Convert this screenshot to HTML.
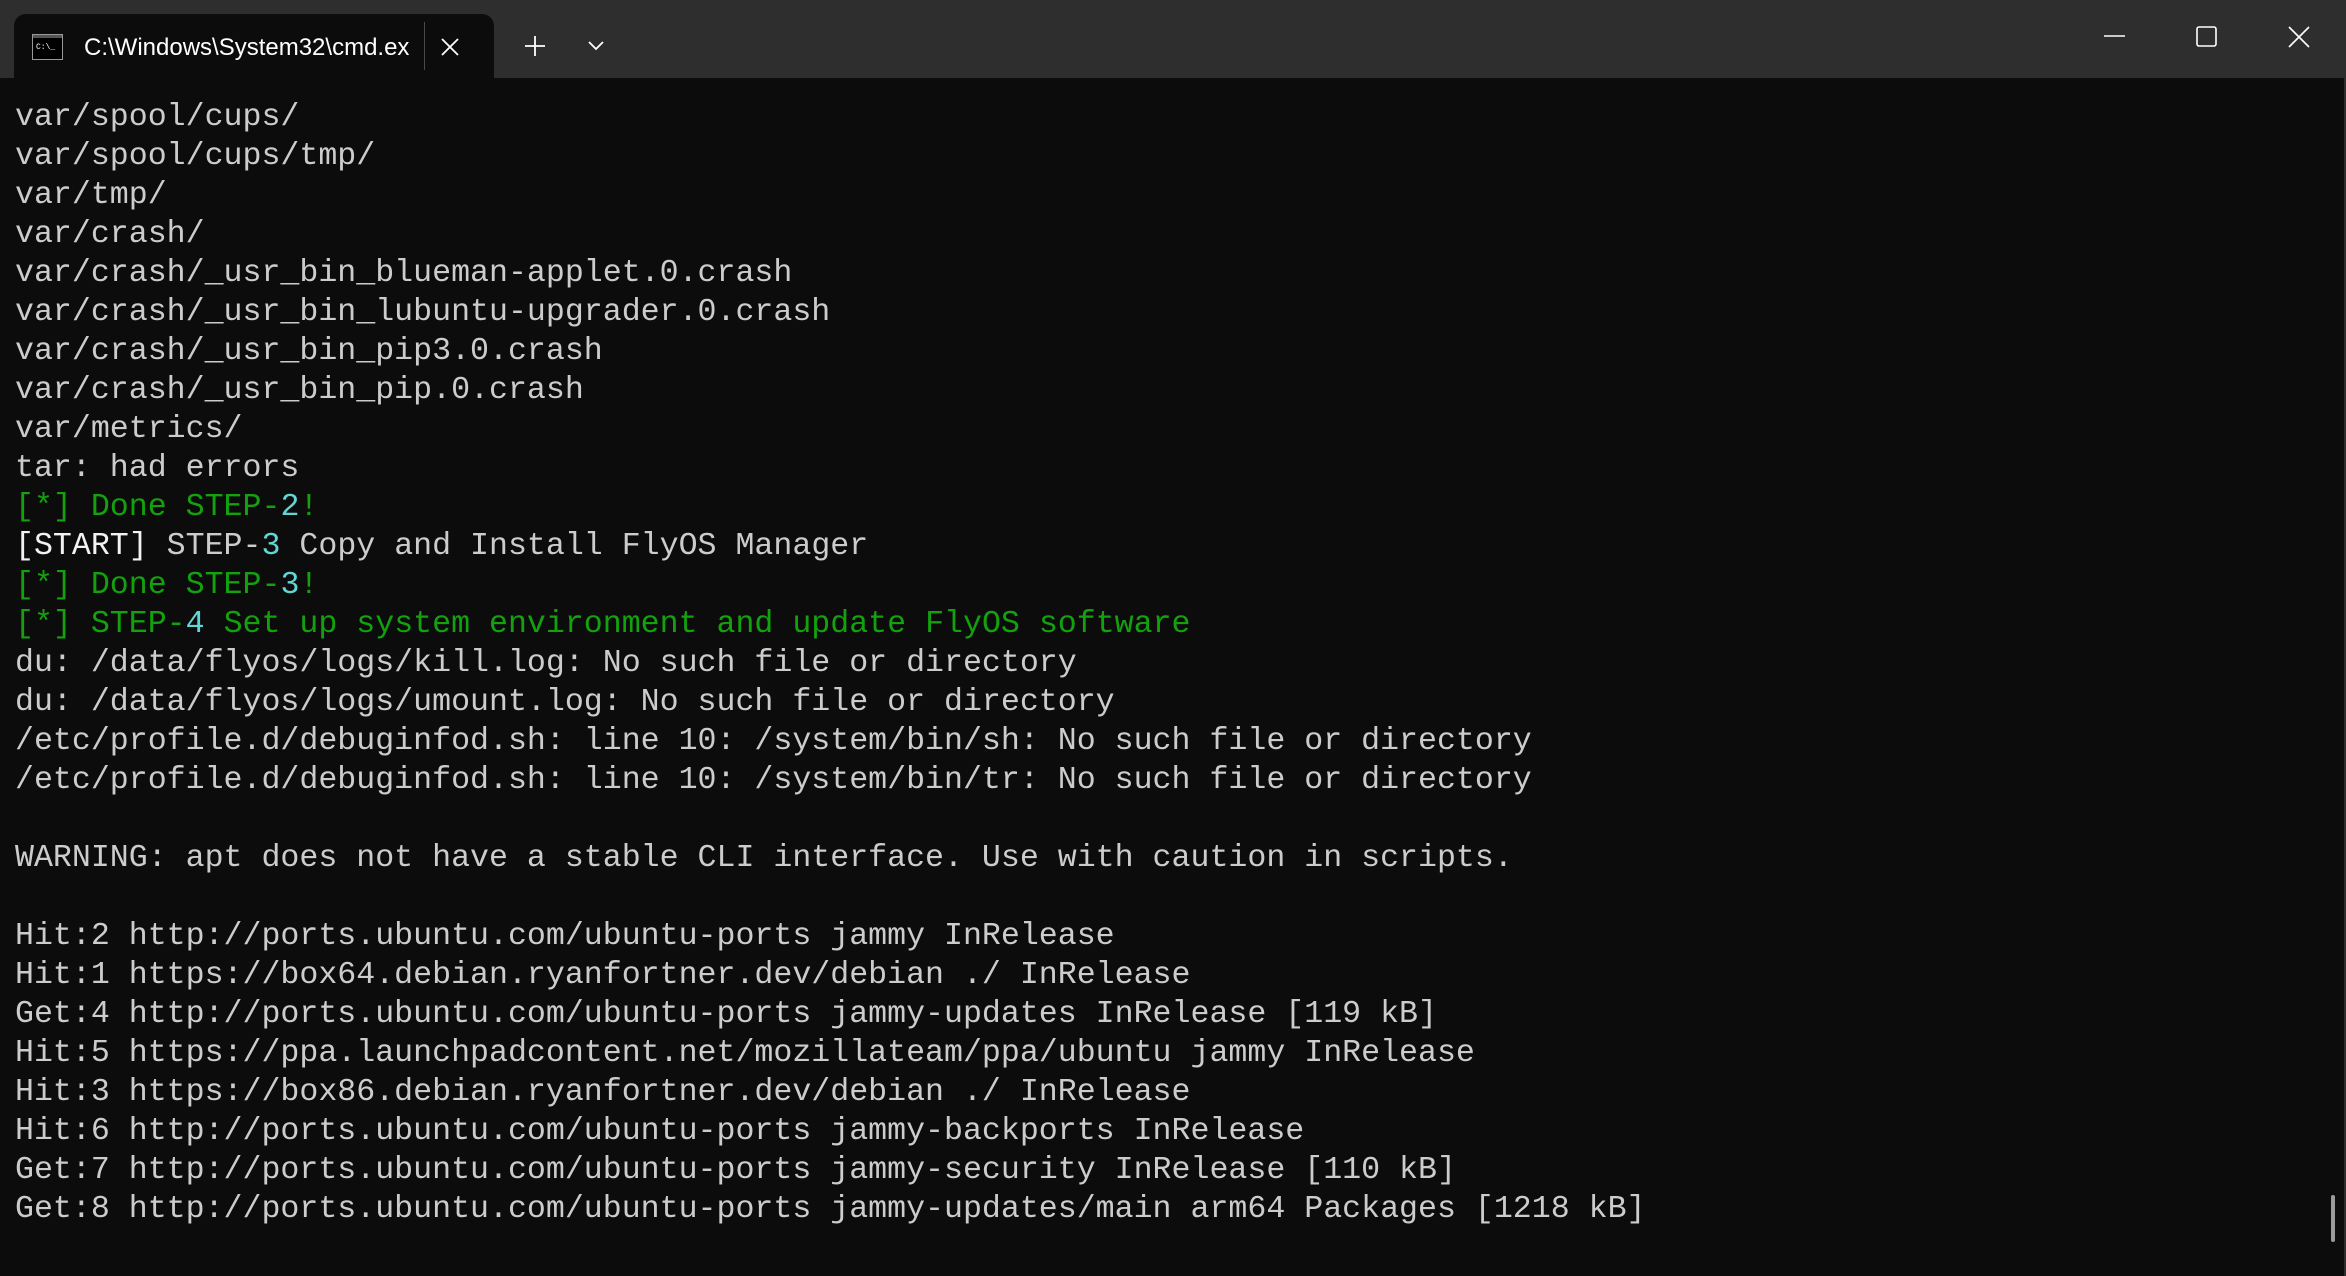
<!DOCTYPE html>
<html><head><meta charset="utf-8"><style>
html,body{margin:0;padding:0;}
body{width:2346px;height:1276px;background:#2e2e2e;position:relative;overflow:hidden;font-family:"Liberation Sans",sans-serif;}
#term{position:absolute;left:0;top:78px;width:2344px;height:1198px;background:#0c0c0c;}
#tab{position:absolute;left:14px;top:14px;width:480px;height:70px;background:#0c0c0c;border-radius:12px 12px 0 0;}
#title{position:absolute;left:84px;top:34px;color:#fff;font-size:24px;width:326px;white-space:nowrap;overflow:hidden;}
pre{position:absolute;left:15px;top:98px;margin:0;font-family:"Liberation Mono",monospace;font-size:31.6px;line-height:39px;color:#cccccc;}
.g{color:#13a10e}.c{color:#61d6d6}.w{color:#f2f2f2}
svg{position:absolute;}
</style></head><body>
<div id="term"></div>
<div id="tab"></div>
<svg style="left:32px;top:34px" width="31" height="26"><rect x="0.5" y="0.5" width="30" height="25" fill="#000" stroke="#999"/><rect x="1" y="1" width="29" height="3" fill="#555"/><text x="4" y="15" font-size="8" fill="#fff" font-family="Liberation Mono">C:\_</text></svg>
<div id="title">C:\Windows\System32\cmd.exe</div>
<svg style="left:440px;top:37px" width="20" height="20"><path d="M2 2L18 18M18 2L2 18" stroke="#fff" stroke-width="1.8"/></svg>
<svg style="left:524px;top:35px" width="22" height="22"><path d="M11 1V21M1 11H21" stroke="#fff" stroke-width="1.8"/></svg>
<div style="position:absolute;left:424px;top:22px;width:1px;height:48px;background:#4a4a4a"></div>
<svg style="left:588px;top:41px" width="16" height="10"><path d="M1 1L8 8L15 1" stroke="#fff" stroke-width="1.8" fill="none"/></svg>
<svg style="left:2104px;top:34px" width="22" height="4"><path d="M0 2H21" stroke="#fff" stroke-width="1.6"/></svg>
<svg style="left:2196px;top:26px" width="22" height="22"><rect x="1" y="1" width="19" height="19" rx="2" stroke="#fff" stroke-width="1.6" fill="none"/></svg>
<svg style="left:2288px;top:26px" width="22" height="22"><path d="M1 1L21 21M21 1L1 21" stroke="#fff" stroke-width="1.6"/></svg>
<div style="position:absolute;left:2331px;top:1195px;width:4px;height:47px;background:#9a9a9a;border-radius:2px"></div>
<pre>var/spool/cups/
var/spool/cups/tmp/
var/tmp/
var/crash/
var/crash/_usr_bin_blueman-applet.0.crash
var/crash/_usr_bin_lubuntu-upgrader.0.crash
var/crash/_usr_bin_pip3.0.crash
var/crash/_usr_bin_pip.0.crash
var/metrics/
tar: had errors
<span class="g">[*] Done STEP-</span><span class="c">2</span><span class="g">!</span>
<span class="w">[START]</span> STEP-<span class="c">3</span> Copy and Install FlyOS Manager
<span class="g">[*] Done STEP-</span><span class="c">3</span><span class="g">!</span>
<span class="g">[*] STEP-</span><span class="c">4</span><span class="g"> Set up system environment and update FlyOS software</span>
du: /data/flyos/logs/kill.log: No such file or directory
du: /data/flyos/logs/umount.log: No such file or directory
/etc/profile.d/debuginfod.sh: line 10: /system/bin/sh: No such file or directory
/etc/profile.d/debuginfod.sh: line 10: /system/bin/tr: No such file or directory

WARNING: apt does not have a stable CLI interface. Use with caution in scripts.

Hit:2 http://ports.ubuntu.com/ubuntu-ports jammy InRelease
Hit:1 https://box64.debian.ryanfortner.dev/debian ./ InRelease
Get:4 http://ports.ubuntu.com/ubuntu-ports jammy-updates InRelease [119 kB]
Hit:5 https://ppa.launchpadcontent.net/mozillateam/ppa/ubuntu jammy InRelease
Hit:3 https://box86.debian.ryanfortner.dev/debian ./ InRelease
Hit:6 http://ports.ubuntu.com/ubuntu-ports jammy-backports InRelease
Get:7 http://ports.ubuntu.com/ubuntu-ports jammy-security InRelease [110 kB]
Get:8 http://ports.ubuntu.com/ubuntu-ports jammy-updates/main arm64 Packages [1218 kB]</pre>
</body></html>
